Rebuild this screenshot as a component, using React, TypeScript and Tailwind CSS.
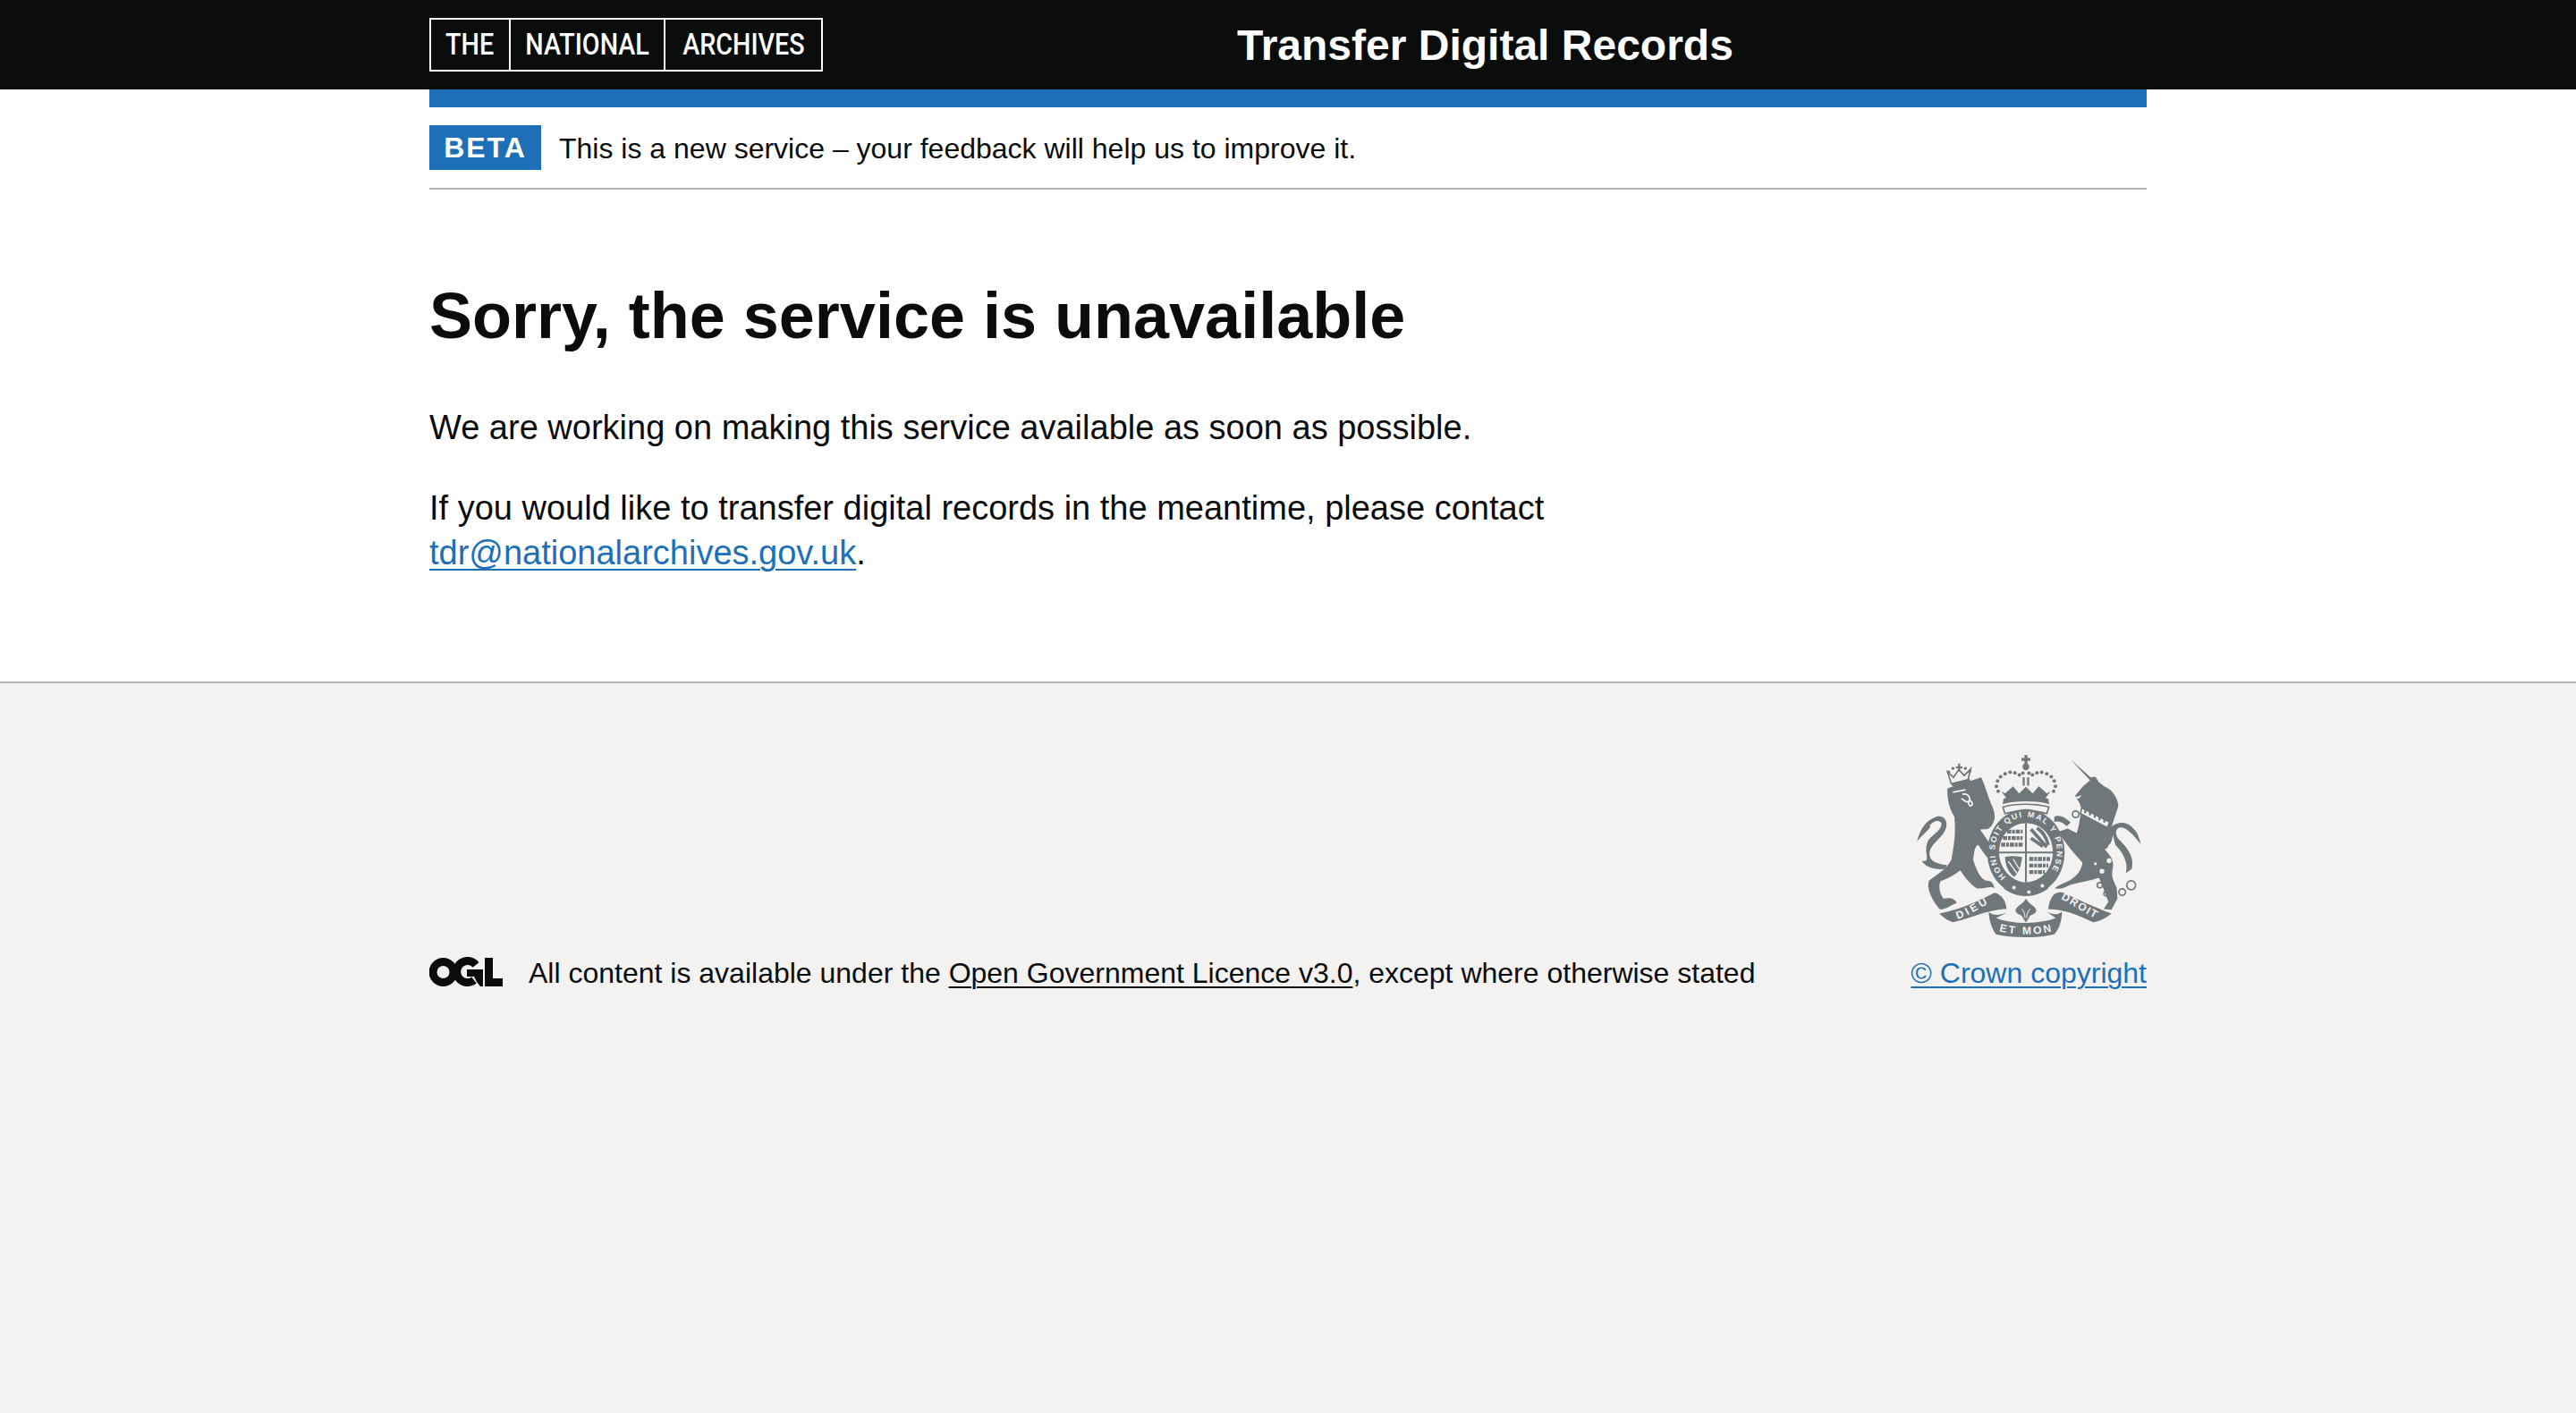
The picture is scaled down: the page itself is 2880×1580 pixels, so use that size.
const sans = "font-['Liberation_Sans',Arial,sans-serif]";

const Crest = () => {
  const grey = "#6f777b";
  const bg = "#f3f2f1";
  return (
    <svg viewBox="60 40 780 620" className="block h-[207px] w-[260px]">
      <defs>
        <path id="garterRing" d="M372 456 A104 114 0 1 1 498 456" />
        <path id="scrollLeft" d="M205 594 C250 580 270 560 322 534" />
        <path id="scrollMid" d="M345 634 C400 648 470 648 525 634" />
        <path id="scrollRight" d="M552 526 C590 545 630 572 672 594" />
      </defs>

      {/* lion */}
      <g fill={grey}>
        <path d="M172 155 L285 118 C300 150 312 195 322 215 C332 240 335 258 320 280 C305 300 292 288 285 295 C300 320 325 340 338 355 C345 375 342 395 325 400 C305 395 290 365 275 345 C262 350 262 370 258 395 C270 430 280 455 300 465 C315 462 325 470 330 490 C310 480 295 495 270 490 C245 475 225 445 215 430 C195 445 170 460 150 465 C140 480 145 505 158 525 C175 522 195 520 203 540 C185 545 165 565 145 560 C120 530 100 490 110 465 C135 445 170 425 185 395 C195 340 200 300 195 250 C175 220 170 180 172 155 Z" />
        <path d="M70 332 C78 300 95 262 135 250 C160 245 172 262 168 285 C160 320 120 335 112 368 C108 395 130 410 170 412 L165 425 C130 430 95 418 86 398 C120 405 90 370 105 335 C112 315 150 300 152 275 C150 258 125 262 112 280 C122 282 100 300 70 332 Z" />
        {/* lion crown */}
        <path d="M185 140 L172 100 L192 118 L210 92 L228 112 L250 90 L240 128 Z" fill="none" stroke={grey} strokeWidth="5" />
        <path d="M200 85 H222 M211 72 V98" stroke={grey} strokeWidth="7" />
        <circle cx="176" cy="100" r="5" />
        <circle cx="190" cy="88" r="5" />
        <circle cx="232" cy="88" r="5" />
        <circle cx="247" cy="98" r="5" />
        <path d="M183 138 L246 122 L250 134 L190 150 Z" />
      </g>
      <path d="M190 168 L232 160 M222 175 C235 172 250 180 245 195 C238 210 225 190 218 190 M248 195 C258 205 258 212 248 214 C240 210 242 200 248 195 Z" fill="none" stroke={bg} strokeWidth="5" />
      <path d="M284 293 L338 372" stroke={bg} strokeWidth="4" />

      {/* unicorn */}
      <g fill={grey}>
        <path d="M585 58 L652 118 L668 116 L680 135 L700 150 C725 160 745 190 745 215 L722 285 C735 320 715 355 700 360 C715 380 735 395 725 430 C720 455 735 475 740 490 L742 525 L722 562 L696 560 L712 535 C700 510 692 480 680 455 C650 465 620 470 585 478 C565 488 550 495 532 490 C545 478 570 472 585 462 C610 445 620 430 625 405 L590 365 C570 340 555 320 545 300 L575 290 L605 305 C615 280 615 255 622 225 L615 205 L600 180 L625 150 L650 128 Z" />
        <path d="M720 285 C745 262 780 268 795 290 C808 300 815 320 820 342 C800 318 780 290 755 286 C735 285 730 310 750 330 C775 355 800 385 790 425 L770 440 C780 405 760 370 735 345 Z" />
        <path d="M530 250 C550 242 570 255 585 270 L572 282 C560 270 545 262 530 268 Z" />
      </g>
      <path d="M622 220 L716 268 L708 287 L618 240 Z" fill={bg} stroke={grey} strokeWidth="5" />
      <path d="M634 225 V238 M650 232 V246 M666 240 V254 M682 248 V262 M698 256 V270" stroke={grey} strokeWidth="7" />
      <g fill={bg}>
        <circle cx="721" cy="352" r="10" />
        <circle cx="714" cy="398" r="8" />
        <circle cx="690" cy="433" r="8" />
        <circle cx="668" cy="408" r="5" />
        <path d="M598 185 L622 178 L612 190 Z" />
      </g>
      <g fill="none" stroke={grey} strokeWidth="5">
        <circle cx="602" cy="242" r="11" />
        <circle cx="590" cy="327" r="12" />
        <circle cx="683" cy="480" r="9" />
        <ellipse cx="708" cy="508" rx="12" ry="9" />
        <circle cx="758" cy="503" r="11" />
        <circle cx="788" cy="480" r="15" />
      </g>

      {/* royal crown */}
      <g fill={grey}>
        <path d="M420 58 H450 M435 43 V73" stroke={grey} strokeWidth="10" />
        <circle cx="435" cy="83" r="11" />
        <rect x="424" y="118" width="7" height="28" />
        <rect x="439" y="118" width="7" height="28" />
        <path d="M352 165 L375 195 H495 L518 165 L505 172 L478 148 L458 172 L435 150 L412 172 L392 148 L365 172 Z" />
        <path d="M360 190 C400 172 470 172 510 190 L513 208 C470 195 400 195 357 208 Z" />
        <path d="M358 218 C400 205 470 205 512 218 L505 240 C470 228 400 228 365 240 Z" fill="none" stroke={grey} strokeWidth="5" />
        {[
          [342, 165], [336, 148], [340, 130], [350, 116], [365, 106], [382, 101], [398, 103], [413, 110], [425, 104],
          [528, 165], [534, 148], [530, 130], [520, 116], [505, 106], [488, 101], [472, 103], [457, 110], [445, 104],
        ].map(([x, y]) => (
          <circle key={`${x}-${y}`} cx={x} cy={y} r="6" />
        ))}
      </g>

      {/* garter and shield */}
      <ellipse cx="435" cy="370" rx="130" ry="145" fill={grey} />
      <path d="M360 490 C400 525 470 525 510 490 L505 475 H365 Z" fill={grey} />
      <text fill={bg} fontFamily="'Liberation Sans',Arial,sans-serif" fontWeight="700" fontSize="27">
        <textPath href="#garterRing" startOffset="1%" textLength="505" lengthAdjust="spacing">HONI SOIT QUI MAL Y PENSE</textPath>
      </text>
      <path d="M345 370 C345 310 390 272 435 272 C485 272 525 310 525 370 C525 425 485 470 435 470 C390 470 345 425 345 370 Z" fill={bg} />
      <path d="M432 272 H438 V470 H432 Z M345 367 H525 V373 H345 Z" fill={grey} />
      <g stroke={grey} fill="none">
        <path d="M372 300 H424 M358 322 H424 M352 344 H424" strokeWidth="13" strokeDasharray="14 3 9 3" />
        <path d="M446 392 H516 M446 414 H510 M446 436 H498" strokeWidth="13" strokeDasharray="14 3 9 3" />
      </g>
      <path d="M452 292 L505 352 M472 288 C492 300 504 320 510 345 M452 322 L492 350" stroke={grey} strokeWidth="11" fill="none" />
      <path d="M365 385 C395 378 415 385 422 385 C420 420 405 445 395 452 C380 440 365 415 365 385 Z" fill={grey} />
      <path d="M376 400 L405 440 M392 392 L412 425" stroke={bg} strokeWidth="4" />
      <circle cx="395" cy="488" r="6" fill={bg} />
      <circle cx="445" cy="503" r="6" fill={bg} />
      <circle cx="490" cy="482" r="6" fill={bg} />

      {/* motto scroll */}
      <g fill={grey}>
        <path d="M145 575 C220 560 280 530 330 505 C352 510 368 530 370 560 C310 560 255 590 190 604 C175 600 160 590 145 575 Z" />
        <path d="M530 510 C550 498 565 505 575 512 C625 535 680 560 722 575 C705 590 680 602 660 604 C610 580 560 560 510 560 C512 540 520 520 530 510 Z" />
        <path d="M310 570 C330 585 345 580 372 572 L335 590 C390 612 480 612 535 590 L505 570 C525 578 540 582 556 568 C555 600 548 625 530 645 C470 658 390 658 335 645 C320 625 312 600 310 570 Z" />
        <path d="M435 525 C445 545 468 550 470 565 C465 582 448 575 445 590 L435 605 L425 590 C422 575 405 582 400 565 C402 550 425 545 435 525 Z" />
      </g>
      <path d="M420 560 C428 565 432 575 432 590 M450 560 C442 565 438 575 438 590" stroke={bg} strokeWidth="3" fill="none" />
      <g fill={bg} fontFamily="'Liberation Sans',Arial,sans-serif" fontWeight="700" fontSize="36">
        <text>
          <textPath href="#scrollLeft" textLength="115" lengthAdjust="spacing">DIEU</textPath>
        </text>
        <text>
          <textPath href="#scrollMid" textLength="178" lengthAdjust="spacing">ET MON</textPath>
        </text>
        <text>
          <textPath href="#scrollRight" textLength="132" lengthAdjust="spacing">DROIT</textPath>
        </text>
      </g>
    </svg>
  );
};

const OglLogo = () => {
  return (
    <svg viewBox="0 0 82 34" className="block h-[34px] w-[82px] shrink-0" fill="#0b0c0c">
      <circle cx="15.5" cy="17" r="11.5" fill="none" stroke="#0b0c0c" strokeWidth="9" />
      <path d="M52 9 A12 12 0 1 0 50 26" fill="none" stroke="#0b0c0c" strokeWidth="9" />
      <path d="M42 14 H60 V33 H57 L53 28 L50 22 H42 Z" />
      <path d="M62 1 H71 V24 H82 V33 H62 Z" />
    </svg>
  );
};

const logoCells = [
  { label: "THE", cell: "w-[87px]" },
  { label: "NATIONAL", cell: "w-[175px] border-x-2 border-white" },
  { label: "ARCHIVES", cell: "w-[174px]" },
];

const App = () => {
  return (
    <div className={`flex min-h-[1580px] flex-col bg-white text-[#0b0c0c] ${sans}`}>
      <header className="h-[100px] bg-[#0b0c0c] text-white">
        <div className="mx-auto flex h-full w-[1920px] items-center">
          <div className="flex h-[60px] w-[440px] shrink-0 border-2 border-white">
            {logoCells.map((item) => (
              <div key={item.label} className={`flex items-center justify-center ${item.cell}`}>
                <span className="inline-block origin-center scale-x-[0.87] font-['Roboto',sans-serif] text-[33px] font-medium whitespace-nowrap">
                  {item.label}
                </span>
              </div>
            ))}
          </div>
          <div className="ml-[463px] pt-[2px] text-[48px] leading-[50px] font-bold">Transfer Digital Records</div>
        </div>
      </header>

      <div className="mx-auto w-[1920px]">
        <div className="h-5 bg-[#1d70b8]" />
        <div className="flex items-center border-b-2 border-[#b1b4b6] py-5">
          <strong className="flex h-[50px] w-[125px] items-center justify-center bg-[#1d70b8] text-[32px] font-bold tracking-[2px] text-white">
            BETA
          </strong>
          <p className="ml-5 pt-[2px] text-[32px] leading-[48px]">This is a new service – your feedback will help us to improve it.</p>
        </div>

        <main className="pt-[101px] pb-[119px]">
          <h1 className="text-[72px] leading-[80px] font-bold">Sorry, the service is unavailable</h1>
          <p className="mt-[60px] text-[38px] leading-[50px]">
            We are working on making this service available as soon as possible.
          </p>
          <p className="mt-10 w-[1280px] text-[38px] leading-[50px]">
            If you would like to transfer digital records in the meantime, please contact{" "}
            <a href="#" className="text-[#1d70b8] underline decoration-2 underline-offset-[5px]">
              tdr@nationalarchives.gov.uk
            </a>
            .
          </p>
        </main>
      </div>

      <footer className="flex-1 border-t-2 border-[#b1b4b6] bg-[#f3f2f1] pt-[79px]">
        <div className="mx-auto flex w-[1920px] items-end justify-between">
          <div className="flex items-center">
            <OglLogo />
            <p className="ml-[29px] pt-[2px] text-[32px] leading-[48px]">
              All content is available under the{" "}
              <a href="#" className="underline decoration-2 underline-offset-[4px]">
                Open Government Licence v3.0
              </a>
              , except where otherwise stated
            </p>
          </div>
          <div className="flex flex-col items-end">
            <Crest />
            <a href="#" className="mt-3 pt-[2px] text-[32px] leading-[48px] text-[#1d70b8] underline decoration-2 underline-offset-[4px]">
              © Crown copyright
            </a>
          </div>
        </div>
      </footer>
    </div>
  );
};

export default App;
